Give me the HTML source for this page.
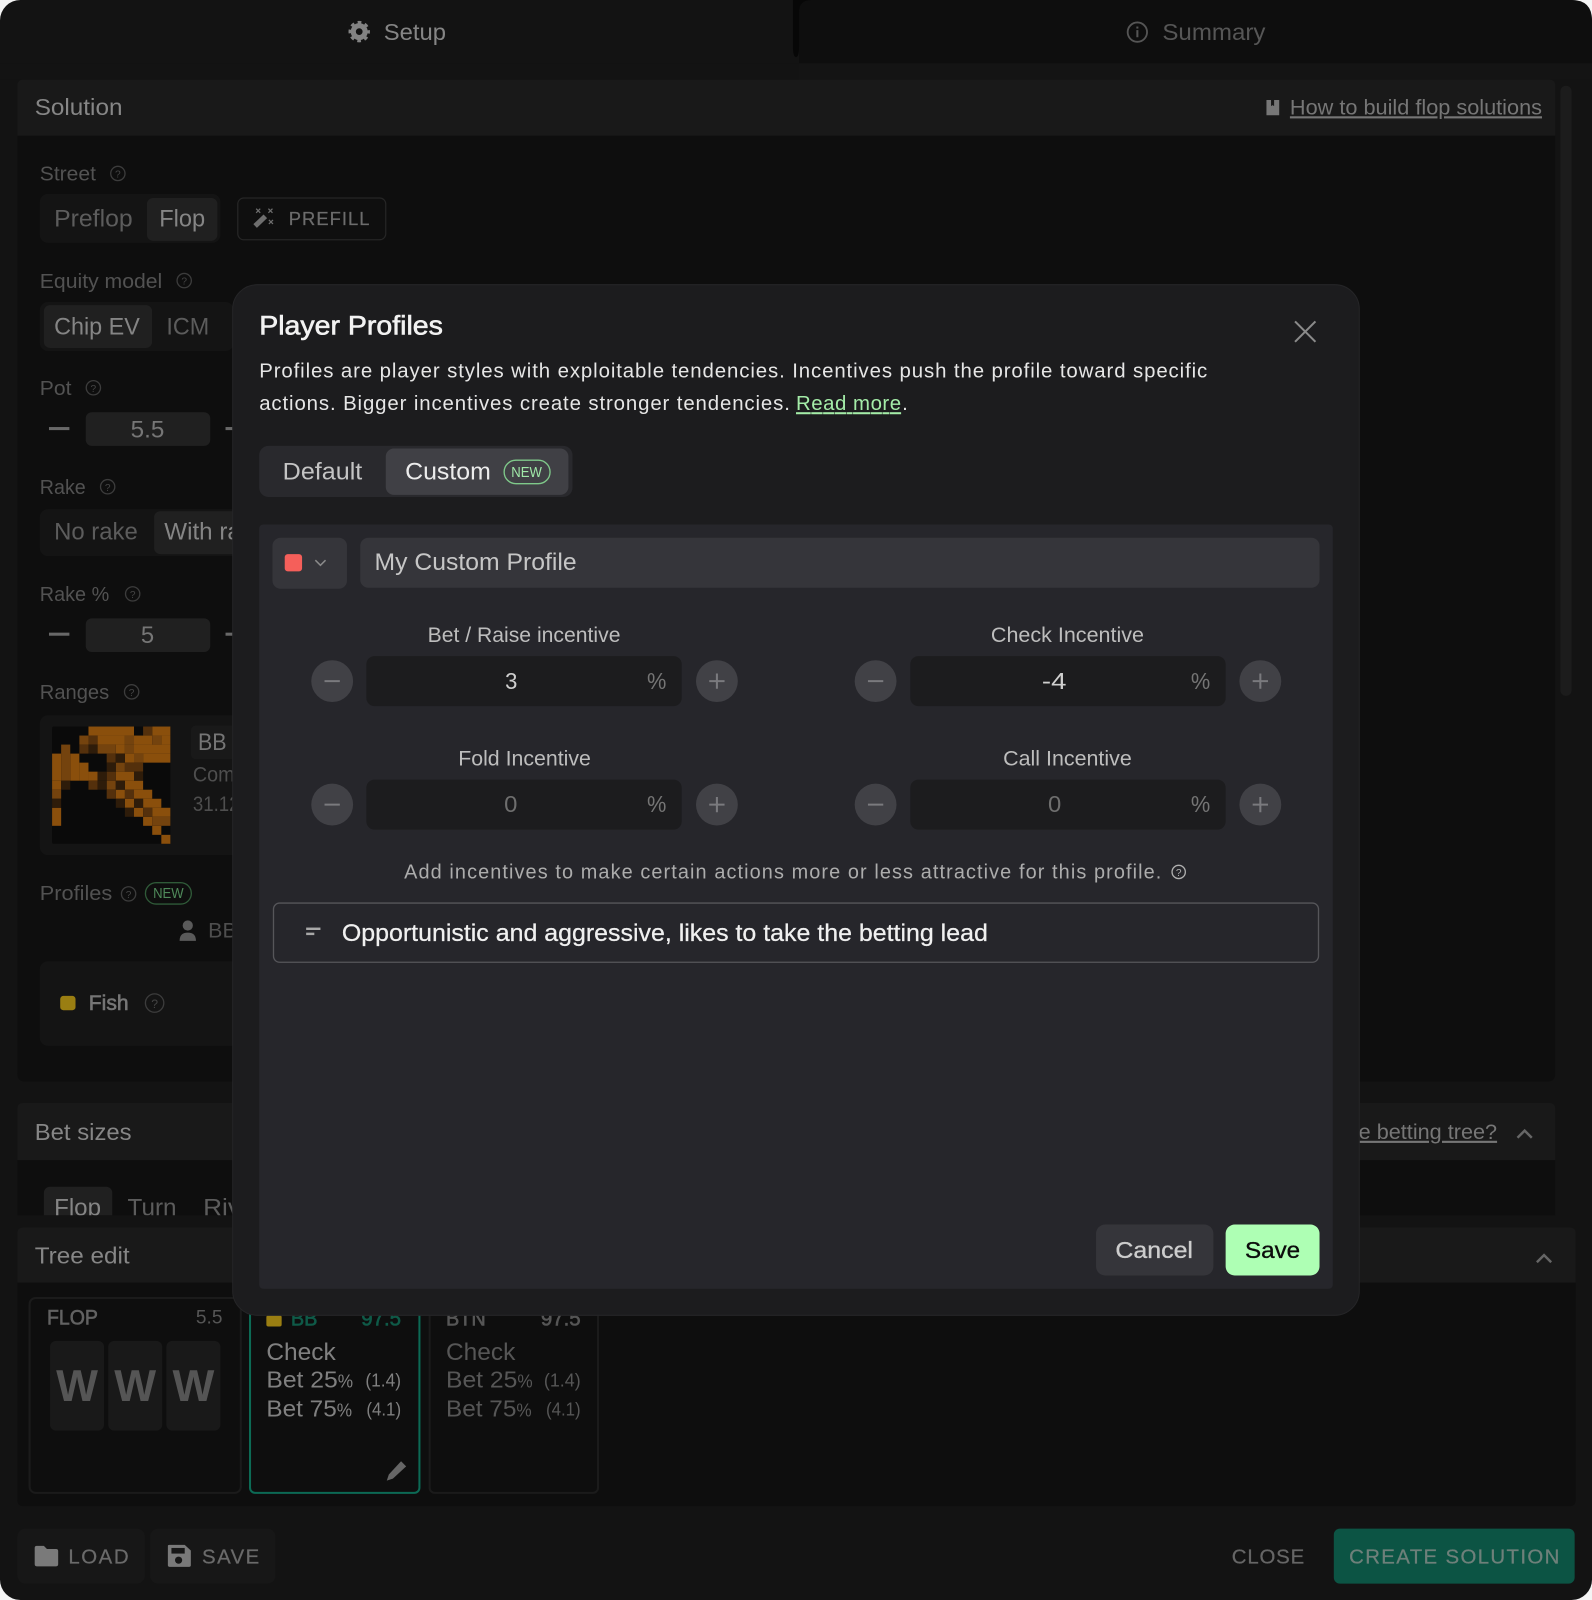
<!DOCTYPE html>
<html lang="en"><head><meta charset="utf-8"><title>Player Profiles</title>
<style>
html,body{margin:0;padding:0;background:#f4f4f4;width:1592px;height:1600px;overflow:hidden}
svg{display:block}
text{font-family:"Liberation Sans",Arial,sans-serif;white-space:pre}
</style></head><body>
<svg style="filter:blur(.3px)" width="1592" height="1600" viewBox="0 0 1560 1568" preserveAspectRatio="none" xmlns="http://www.w3.org/2000/svg">
<defs><clipPath id="betclip"><rect x="17" y="1137" width="1507" height="54"/></clipPath></defs>
<rect x="0" y="0" width="1560" height="1568" rx="20" fill="#131313"/>
<!-- tabs -->
<path d="M783 62V12Q783 0 795 0H1540Q1560 0 1560 20V62Z" fill="#0e0e0e"/>
<path d="M777 0V45Q777 56 780 56Q783 56 783 45V12Q783 0 795 0Z" fill="#070707"/>
<rect x="0" y="62" width="783" height="16" fill="#131313"/>
<rect x="783" y="62" width="777" height="16" fill="#141414"/>
<g transform="translate(352 31)"><circle r="5.8" fill="none" stroke="#838383" stroke-width="5"/><circle r="9" fill="none" stroke="#838383" stroke-width="3" stroke-dasharray="3.6 3.47" stroke-dashoffset="1.8"/></g>
<text x="376" y="39" font-size="23" fill="#858585" textLength="61" lengthAdjust="spacingAndGlyphs">Setup</text>
<circle cx="1114.500" cy="31.500" r="9.500" fill="none" stroke="#555" stroke-width="1.800"/><rect x="1113.500" y="29.500" width="2" height="7" fill="#555"/><rect x="1113.500" y="26" width="2" height="2" fill="#555"/>
<text x="1139" y="39" font-size="23" fill="#565656" textLength="101" lengthAdjust="spacingAndGlyphs">Summary</text>

<!-- solution -->
<path d="M17 133V84Q17 78 23 78H1518Q1524 78 1524 84V133Z" fill="#191919"/>
<path d="M17 133H1524V1052Q1524 1060 1516 1060H25Q17 1060 17 1052Z" fill="#0e0e0e"/>
<rect x="1529" y="84" width="11" height="598" rx="5.500" fill="#1c1c1c"/>
<text x="34" y="112.500" font-size="23" fill="#868686" textLength="86" lengthAdjust="spacingAndGlyphs">Solution</text>
<path d="M1241 98h4.500v6l1.500-1 1.500 1v-6h5v15h-12.500Z" fill="#777"/>
<text x="1264" y="112" font-size="21" fill="#767676" text-decoration="underline" textLength="247" lengthAdjust="spacingAndGlyphs">How to build flop solutions</text>

<text x="39" y="177" font-size="20" fill="#525252" textLength="55" lengthAdjust="spacingAndGlyphs">Street</text>
<circle cx="115.500" cy="170" r="7" fill="none" stroke="#3c3c3c" stroke-width="1.300"/><text x="115.500" y="174" font-size="10" fill="#444" text-anchor="middle">?</text>
<rect x="39" y="190" width="177" height="48" rx="8" fill="#141414"/>
<rect x="144" y="194" width="69" height="42" rx="6" fill="#202020"/>
<text x="53" y="222" font-size="24" fill="#5c5c5c" textLength="77" lengthAdjust="spacingAndGlyphs">Preflop</text>
<text x="156" y="222" font-size="24" fill="#858585" textLength="45" lengthAdjust="spacingAndGlyphs">Flop</text>
<rect x="233" y="194" width="145" height="41" rx="6" fill="#0f0f0f" stroke="#262626" stroke-width="1.200"/>
<path d="M250 221.500l10-9.500" stroke="#6e6e6e" stroke-width="5" fill="none"/>
<path d="M251 204.500l4 4M255 204.500l-4 4M263 204.500l4 4M267 204.500l-4 4M263.500 215.500l4 4M267.500 215.500l-4 4" stroke="#6e6e6e" stroke-width="1.200" fill="none"/>
<text x="283" y="220.500" font-size="18" fill="#6c6c6c" stroke="#6c6c6c" stroke-width=".25" textLength="79">PREFILL</text>

<text x="39" y="282" font-size="20" fill="#525252" textLength="120" lengthAdjust="spacingAndGlyphs">Equity model</text>
<circle cx="180.500" cy="275" r="7" fill="none" stroke="#3c3c3c" stroke-width="1.300"/><text x="180.500" y="279" font-size="10" fill="#444" text-anchor="middle">?</text>
<rect x="39" y="296" width="190" height="48" rx="8" fill="#141414"/>
<rect x="43" y="299" width="106" height="42" rx="6" fill="#202020"/>
<text x="53" y="328" font-size="24" fill="#858585" textLength="84" lengthAdjust="spacingAndGlyphs">Chip EV</text>
<text x="163" y="328" font-size="24" fill="#5c5c5c" textLength="42" lengthAdjust="spacingAndGlyphs">ICM</text>

<text x="39" y="387" font-size="20" fill="#525252" textLength="31" lengthAdjust="spacingAndGlyphs">Pot</text>
<circle cx="91.500" cy="380" r="7" fill="none" stroke="#3c3c3c" stroke-width="1.300"/><text x="91.500" y="384" font-size="10" fill="#444" text-anchor="middle">?</text>
<rect x="48" y="418.500" width="20" height="3" fill="#686868"/>
<rect x="84" y="404" width="122" height="33" rx="6" fill="#202020"/>
<text x="128" y="429" font-size="24" fill="#767676" textLength="33" lengthAdjust="spacingAndGlyphs">5.5</text>
<rect x="221" y="418.500" width="20" height="3" fill="#686868"/>

<text x="39" y="484" font-size="20" fill="#525252" textLength="45" lengthAdjust="spacingAndGlyphs">Rake</text>
<circle cx="105.500" cy="477" r="7" fill="none" stroke="#3c3c3c" stroke-width="1.300"/><text x="105.500" y="481" font-size="10" fill="#444" text-anchor="middle">?</text>
<rect x="39" y="499" width="215" height="46" rx="8" fill="#141414"/>
<rect x="151" y="501" width="100" height="42" rx="6" fill="#202020"/>
<text x="53" y="528.500" font-size="24" fill="#5c5c5c" textLength="82" lengthAdjust="spacingAndGlyphs">No rake</text>
<text x="161" y="528.500" font-size="24" fill="#858585" textLength="100" lengthAdjust="spacingAndGlyphs">With rake</text>

<text x="39" y="589" font-size="20" fill="#525252" textLength="68" lengthAdjust="spacingAndGlyphs">Rake %</text>
<circle cx="130" cy="582" r="7" fill="none" stroke="#3c3c3c" stroke-width="1.300"/><text x="130" y="586" font-size="10" fill="#444" text-anchor="middle">?</text>
<rect x="48" y="620" width="20" height="3" fill="#686868"/>
<rect x="84" y="606" width="122" height="33" rx="6" fill="#202020"/>
<text x="138" y="630" font-size="24" fill="#767676" textLength="13" lengthAdjust="spacingAndGlyphs">5</text>
<rect x="221" y="620" width="20" height="3" fill="#686868"/>

<text x="39" y="685" font-size="20" fill="#525252" textLength="68" lengthAdjust="spacingAndGlyphs">Ranges</text>
<circle cx="129" cy="678" r="7" fill="none" stroke="#3c3c3c" stroke-width="1.300"/><text x="129" y="682" font-size="10" fill="#444" text-anchor="middle">?</text>
<rect x="39" y="701" width="215" height="137" rx="8" fill="#141414"/>
<rect x="187" y="711" width="60" height="33" rx="5" fill="#191919"/>
<svg x="51" y="712" width="116" height="115" viewBox="0 0 13 13" preserveAspectRatio="none">
<rect width="13" height="13" rx=".2" fill="#0a0a0a"/>
<g fill="#8a4f0c">
<rect x="4" y="0" width="5" height="1"/><rect x="11" y="0" width="2" height="1"/>
<rect x="5" y="1" width="3" height="1"/><rect x="9" y="1" width="2" height="1"/><rect x="12" y="1" width="1" height="1"/>
<rect x="7" y="2" width="1" height="1"/><rect x="9" y="2" width="4" height="1"/>
<rect x="0" y="3" width="1" height="3"/><rect x="2" y="3" width="1" height="3"/><rect x="8" y="3" width="1" height="1"/><rect x="10" y="3" width="3" height="1"/>
<rect x="3" y="4" width="1" height="2"/><rect x="4" y="5" width="1" height="1"/><rect x="7" y="5" width="2" height="1"/>
<rect x="0" y="6" width="1" height="1"/><rect x="8" y="6" width="2" height="1"/>
<rect x="7" y="7" width="1" height="1"/><rect x="9" y="7" width="2" height="1"/>
<rect x="8" y="8" width="1" height="1"/><rect x="10" y="8" width="2" height="1"/>
<rect x="0" y="9" width="1" height="2"/><rect x="9" y="9" width="1" height="1"/><rect x="11" y="9" width="2" height="1"/>
<rect x="10" y="10" width="1" height="1"/><rect x="11" y="11" width="1" height="1"/><rect x="12" y="12" width="1" height="1"/>
</g>
<g fill="#74430e">
<rect x="3" y="1" width="1" height="1"/><rect x="8" y="1" width="1" height="1"/><rect x="11" y="1" width="1" height="1"/>
<rect x="1" y="2" width="1" height="4"/><rect x="5" y="2" width="2" height="1"/><rect x="8" y="2" width="1" height="1"/>
<rect x="9" y="3" width="1" height="1"/><rect x="7" y="4" width="1" height="1"/><rect x="6" y="6" width="1" height="1"/>
<rect x="0" y="7" width="1" height="1"/><rect x="11" y="10" width="2" height="1"/>
</g>
<g fill="#54300c">
<rect x="10" y="0" width="1" height="1"/><rect x="4" y="1" width="1" height="1"/><rect x="3" y="2" width="1" height="1"/>
<rect x="6" y="3" width="1" height="1"/><rect x="8" y="4" width="2" height="1"/><rect x="6" y="5" width="1" height="1"/>
<rect x="4" y="6" width="1" height="1"/><rect x="6" y="7" width="1" height="1"/><rect x="8" y="7" width="1" height="1"/><rect x="10" y="9" width="1" height="1"/>
</g>
<g fill="#2e1c0a">
<rect x="4" y="2" width="1" height="1"/><rect x="7" y="3" width="1" height="1"/><rect x="6" y="4" width="1" height="1"/>
<rect x="5" y="5" width="1" height="1"/><rect x="9" y="5" width="1" height="1"/><rect x="1" y="6" width="1" height="1"/>
<rect x="5" y="6" width="1" height="1"/><rect x="7" y="6" width="1" height="1"/><rect x="0" y="8" width="1" height="1"/>
<rect x="7" y="8" width="1" height="1"/><rect x="9" y="8" width="1" height="1"/><rect x="8" y="9" width="1" height="1"/>
</g>
</svg>
<text x="194" y="735" font-size="24" fill="#757575" textLength="28" lengthAdjust="spacingAndGlyphs">BB</text>
<text x="189" y="766" font-size="21" fill="#4e4e4e" textLength="72" lengthAdjust="spacingAndGlyphs">Combos</text>
<text x="189" y="795" font-size="21" fill="#4e4e4e" textLength="62" lengthAdjust="spacingAndGlyphs">31.12%</text>

<text x="39" y="882" font-size="20" fill="#525252" textLength="71" lengthAdjust="spacingAndGlyphs">Profiles</text>
<circle cx="126" cy="876" r="7" fill="none" stroke="#3c3c3c" stroke-width="1.300"/><text x="126" y="880" font-size="10" fill="#444" text-anchor="middle">?</text>
<rect x="142.500" y="865" width="45" height="21" rx="10.500" fill="none" stroke="#2f5a38" stroke-width="1.300"/>
<text x="150" y="880" font-size="14.500" fill="#4f8a5a" textLength="30" lengthAdjust="spacingAndGlyphs">NEW</text>
<circle cx="184" cy="907" r="5" fill="#5a5a5a"/><path d="M176 922q0-8 8-8t8 8Z" fill="#5a5a5a"/>
<text x="204" y="919" font-size="21" fill="#4e4e4e" textLength="28" lengthAdjust="spacingAndGlyphs">BB</text>
<rect x="39" y="942" width="215" height="83" rx="8" fill="#141414"/>
<rect x="59" y="976" width="15" height="14" rx="3" fill="#9a7e12"/>
<text x="87" y="990" font-size="20.500" fill="#767676" stroke="#767676" stroke-width=".6" textLength="39" lengthAdjust="spacingAndGlyphs">Fish</text>
<circle cx="151.500" cy="983" r="9" fill="none" stroke="#3c3c3c" stroke-width="1.300"/><text x="151.500" y="988" font-size="12" fill="#444" text-anchor="middle">?</text>

<!-- bet sizes -->
<path d="M17 1137V1087Q17 1081 23 1081H1518Q1524 1081 1524 1087V1137Z" fill="#191919"/>
<rect x="17" y="1137" width="1507" height="54" fill="#0e0e0e"/>
<text x="34" y="1117" font-size="23" fill="#868686" textLength="95" lengthAdjust="spacingAndGlyphs">Bet sizes</text>
<text x="1191" y="1116" font-size="21" fill="#767676" text-decoration="underline" textLength="276" lengthAdjust="spacingAndGlyphs">How to build the betting tree?</text>
<path d="M1487 1115l7-7 7 7" fill="none" stroke="#666" stroke-width="2.400"/>
<g clip-path="url(#betclip)">
<rect x="43" y="1163" width="67" height="42" rx="6" fill="#202020"/>
<text x="53" y="1191" font-size="24" fill="#858585" textLength="46" lengthAdjust="spacingAndGlyphs">Flop</text>
<text x="125" y="1191" font-size="24" fill="#5c5c5c" textLength="48" lengthAdjust="spacingAndGlyphs">Turn</text>
<text x="199" y="1191" font-size="24" fill="#5c5c5c" textLength="60" lengthAdjust="spacingAndGlyphs">River</text>
</g>

<!-- tree edit -->
<path d="M17 1257V1209Q17 1203 23 1203H1538Q1544 1203 1544 1209V1257Z" fill="#191919"/>
<path d="M17 1257H1544V1470Q1544 1476 1538 1476H23Q17 1476 17 1470Z" fill="#0e0e0e"/>
<text x="34" y="1238" font-size="23" fill="#868686" textLength="93" lengthAdjust="spacingAndGlyphs">Tree edit</text>
<path d="M1506 1237l7-7 7 7" fill="none" stroke="#666" stroke-width="2.400"/>

<rect x="29" y="1272" width="207" height="191" rx="6" fill="#0e0e0e" stroke="#1b1b1b" stroke-width="2"/>
<text x="46" y="1298" font-size="20.500" fill="#626262" stroke="#626262" stroke-width=".6" textLength="50" lengthAdjust="spacingAndGlyphs">FLOP</text>
<text x="192" y="1297" font-size="19" fill="#565656" textLength="26" lengthAdjust="spacingAndGlyphs">5.5</text>
<rect x="49" y="1314" width="53" height="88" rx="6" fill="#191919"/><rect x="106" y="1314" width="53" height="88" rx="6" fill="#191919"/><rect x="163" y="1314" width="53" height="88" rx="6" fill="#191919"/>
<text x="55" y="1373" font-size="44" font-weight="bold" fill="#555" textLength="41" lengthAdjust="spacingAndGlyphs">W</text>
<text x="112" y="1373" font-size="44" font-weight="bold" fill="#555" textLength="41" lengthAdjust="spacingAndGlyphs">W</text>
<text x="169" y="1373" font-size="44" font-weight="bold" fill="#555" textLength="41" lengthAdjust="spacingAndGlyphs">W</text>

<rect x="245" y="1260" width="166" height="203" rx="5" fill="#0e0e0e" stroke="#0c6a55" stroke-width="2"/>
<rect x="261" y="1289" width="15" height="11" rx="2" fill="#9a7e12"/>
<text x="285" y="1299" font-size="20.500" fill="#0f5a48" stroke="#0f5a48" stroke-width=".6" textLength="26" lengthAdjust="spacingAndGlyphs">BB</text>
<text x="354" y="1299" font-size="20.500" fill="#0f5a48" stroke="#0f5a48" stroke-width=".6" textLength="39" lengthAdjust="spacingAndGlyphs">97.5</text>
<text x="261" y="1333" font-size="24" fill="#808080" textLength="68" lengthAdjust="spacingAndGlyphs">Check</text>
<text x="261" y="1360" font-size="23" fill="#808080" textLength="70" lengthAdjust="spacingAndGlyphs">Bet 25</text><text x="331" y="1360" font-size="18" fill="#808080" textLength="15" lengthAdjust="spacingAndGlyphs">%</text>
<text x="358" y="1359" font-size="18.500" fill="#808080" textLength="35" lengthAdjust="spacingAndGlyphs">(1.4)</text>
<text x="261" y="1388" font-size="23" fill="#808080" textLength="69" lengthAdjust="spacingAndGlyphs">Bet 75</text><text x="330" y="1388" font-size="18" fill="#808080" textLength="15" lengthAdjust="spacingAndGlyphs">%</text>
<text x="359" y="1387" font-size="18.500" fill="#808080" textLength="34" lengthAdjust="spacingAndGlyphs">(4.1)</text>
<path d="M379 1451l2-6 12-13 5 5-13 12Z" fill="#666"/>

<rect x="421" y="1260" width="165" height="203" rx="5" fill="#0e0e0e" stroke="#1b1b1b" stroke-width="2"/>
<text x="437" y="1299" font-size="20.500" fill="#565656" stroke="#565656" stroke-width=".6" textLength="39" lengthAdjust="spacingAndGlyphs">BTN</text>
<text x="530" y="1299" font-size="20.500" fill="#565656" stroke="#565656" stroke-width=".6" textLength="39" lengthAdjust="spacingAndGlyphs">97.5</text>
<text x="437" y="1333" font-size="24" fill="#565656" textLength="68" lengthAdjust="spacingAndGlyphs">Check</text>
<text x="437" y="1360" font-size="23" fill="#565656" textLength="70" lengthAdjust="spacingAndGlyphs">Bet 25</text><text x="507" y="1360" font-size="18" fill="#565656" textLength="15" lengthAdjust="spacingAndGlyphs">%</text>
<text x="533" y="1359" font-size="18.500" fill="#565656" textLength="36" lengthAdjust="spacingAndGlyphs">(1.4)</text>
<text x="437" y="1388" font-size="23" fill="#565656" textLength="69" lengthAdjust="spacingAndGlyphs">Bet 75</text><text x="506" y="1388" font-size="18" fill="#565656" textLength="15" lengthAdjust="spacingAndGlyphs">%</text>
<text x="535" y="1387" font-size="18.500" fill="#565656" textLength="34" lengthAdjust="spacingAndGlyphs">(4.1)</text>

<!-- footer -->
<rect x="17" y="1498" width="125" height="54" rx="8" fill="#171717"/>
<rect x="147" y="1498" width="123" height="54" rx="8" fill="#171717"/>
<path d="M34 1517q0-2 2-2h7l3 3h9q2 0 2 2v13q0 2-2 2H36q-2 0-2-2Z" fill="#7a7a7a"/>
<text x="67" y="1532" font-size="20" fill="#6a6a6a" stroke="#6a6a6a" stroke-width=".25" textLength="59">LOAD</text>
<path d="M166 1514h15l6 5.500v14.500q0 1.500-1.500 1.500h-19.500q-1.500 0-1.500-1.500v-19q0-1 1.500-1Z" fill="#7a7a7a"/>
<rect x="168" y="1517" width="13" height="5.500" fill="#171717"/><circle cx="175" cy="1529" r="3.500" fill="#171717"/>
<text x="198" y="1532" font-size="20" fill="#6a6a6a" stroke="#6a6a6a" stroke-width=".25" textLength="56">SAVE</text>
<text x="1207" y="1532" font-size="20" fill="#666" stroke="#666" stroke-width=".25" textLength="71">CLOSE</text>
<rect x="1307" y="1498" width="236" height="54" rx="6" fill="#0c5444"/>
<text x="1322" y="1532" font-size="20" fill="#6e807a" stroke="#6e807a" stroke-width=".25" textLength="206">CREATE SOLUTION</text>

<!-- modal -->
<rect x="228" y="279" width="1104" height="1010" rx="24" fill="#1c1c1e" stroke="#252527" stroke-width="1"/>
<text x="254" y="328" font-size="26" fill="#f2f2f2" stroke="#f2f2f2" stroke-width=".6" textLength="180" lengthAdjust="spacingAndGlyphs">Player Profiles</text>
<path d="M1269 315l20 20M1289 315l-20 20" stroke="#8a8a8a" stroke-width="2" fill="none"/>
<text x="254" y="370" font-size="20" fill="#e6e6e6" textLength="929">Profiles are player styles with exploitable tendencies. Incentives push the profile toward specific</text>
<text x="254" y="402" font-size="20" fill="#e6e6e6" textLength="520">actions. Bigger incentives create stronger tendencies.</text>
<text x="780" y="402" font-size="20" fill="#a4eca8" text-decoration="underline" textLength="103">Read more</text>
<text x="884" y="402" font-size="20" fill="#e6e6e6">.</text>

<rect x="254" y="437" width="307" height="50" rx="9" fill="#29292d"/>
<rect x="378" y="439.500" width="179" height="45.500" rx="8" fill="#404045"/>
<text x="277" y="470" font-size="24" fill="#c4c4c4" textLength="78" lengthAdjust="spacingAndGlyphs">Default</text>
<text x="397" y="470" font-size="24" fill="#ececec" textLength="84" lengthAdjust="spacingAndGlyphs">Custom</text>
<rect x="494" y="451" width="45" height="23" rx="11.500" fill="none" stroke="#7fc98a" stroke-width="1.300"/>
<text x="501" y="467.500" font-size="14.500" fill="#a0e8a8" textLength="30" lengthAdjust="spacingAndGlyphs">NEW</text>

<rect x="254" y="514" width="1052" height="749" rx="4" fill="#26262b"/>
<rect x="267" y="527" width="73" height="50" rx="8" fill="#35353a"/>
<rect x="279" y="543" width="17" height="17" rx="3" fill="#f55f5a"/>
<path d="M309 549l5 5 5-5" fill="none" stroke="#8a8a8a" stroke-width="1.500"/>
<rect x="353" y="527" width="940" height="49" rx="8" fill="#35353a"/>
<text x="367" y="558.500" font-size="24" fill="#c6c6c6" textLength="198" lengthAdjust="spacingAndGlyphs">My Custom Profile</text>

<text x="419" y="629" font-size="20.500" fill="#bdbdbd" textLength="189" lengthAdjust="spacingAndGlyphs">Bet / Raise incentive</text>
<text x="971" y="629" font-size="20.500" fill="#bdbdbd" textLength="150" lengthAdjust="spacingAndGlyphs">Check Incentive</text>
<text x="449" y="750" font-size="20.500" fill="#bdbdbd" textLength="130" lengthAdjust="spacingAndGlyphs">Fold Incentive</text>
<text x="983" y="750" font-size="20.500" fill="#bdbdbd" textLength="126" lengthAdjust="spacingAndGlyphs">Call Incentive</text>

<rect x="359" y="643" width="309" height="49" rx="8" fill="#1c1c1e"/><rect x="892" y="643" width="309" height="49" rx="8" fill="#1c1c1e"/>
<rect x="359" y="764" width="309" height="49" rx="8" fill="#1c1c1e"/><rect x="892" y="764" width="309" height="49" rx="8" fill="#1c1c1e"/>
<g fill="#414146"><circle cx="325.500" cy="667.500" r="20.500"/><circle cx="702.500" cy="667.500" r="20.500"/><circle cx="858" cy="667.500" r="20.500"/><circle cx="1235" cy="667.500" r="20.500"/><circle cx="325.500" cy="788.500" r="20.500"/><circle cx="702.500" cy="788.500" r="20.500"/><circle cx="858" cy="788.500" r="20.500"/><circle cx="1235" cy="788.500" r="20.500"/></g>
<g stroke="#7a7a7e" stroke-width="2" fill="none"><path d="M318 667.500h15M695 667.500h15M702.500 660v15M850.500 667.500h15M1227.500 667.500h15M1235 660v15M318 788.500h15M695 788.500h15M702.500 781v15M850.500 788.500h15M1227.500 788.500h15M1235 781v15"/></g>
<text x="495" y="675" font-size="23" fill="#cfcfcf" textLength="12" lengthAdjust="spacingAndGlyphs">3</text>
<text x="1021" y="675" font-size="23" fill="#cfcfcf" textLength="24" lengthAdjust="spacingAndGlyphs">-4</text>
<text x="494" y="796" font-size="23" fill="#6e6e6e" textLength="13" lengthAdjust="spacingAndGlyphs">0</text>
<text x="1027" y="796" font-size="23" fill="#6e6e6e" textLength="13" lengthAdjust="spacingAndGlyphs">0</text>
<g font-size="22.500" fill="#757575"><text x="634" y="675" textLength="19" lengthAdjust="spacingAndGlyphs">%</text><text x="1167" y="675" textLength="19" lengthAdjust="spacingAndGlyphs">%</text><text x="634" y="796" textLength="19" lengthAdjust="spacingAndGlyphs">%</text><text x="1167" y="796" textLength="19" lengthAdjust="spacingAndGlyphs">%</text></g>

<text x="396" y="861" font-size="19.500" fill="#acacac" textLength="742">Add incentives to make certain actions more or less attractive for this profile.</text>
<circle cx="1155" cy="854.500" r="6.500" fill="none" stroke="#b0b0b0" stroke-width="1.300"/><text x="1155" y="858.500" font-size="10" fill="#b0b0b0" text-anchor="middle">?</text>

<rect x="268" y="885" width="1024" height="58" rx="6" fill="#26262b" stroke="#56565a" stroke-width="1.300"/>
<rect x="300" y="909" width="14" height="2.400" fill="#a8a8a8"/><rect x="300" y="914" width="8" height="2.400" fill="#a8a8a8"/>
<text x="335" y="922" font-size="24" fill="#f0f0f0" stroke="#f0f0f0" stroke-width=".25" textLength="633" lengthAdjust="spacingAndGlyphs">Opportunistic and aggressive, likes to take the betting lead</text>

<rect x="1074" y="1200" width="115" height="50" rx="9" fill="#35353a"/>
<text x="1093" y="1233" font-size="23" fill="#cdcdcd" stroke="#cdcdcd" stroke-width=".35" textLength="76" lengthAdjust="spacingAndGlyphs">Cancel</text>
<rect x="1201" y="1200" width="92" height="50" rx="9" fill="#aeffb4"/>
<text x="1220" y="1233" font-size="23" fill="#0c0c0c" stroke="#0c0c0c" stroke-width=".35" textLength="54" lengthAdjust="spacingAndGlyphs">Save</text>
</svg>
</body></html>
